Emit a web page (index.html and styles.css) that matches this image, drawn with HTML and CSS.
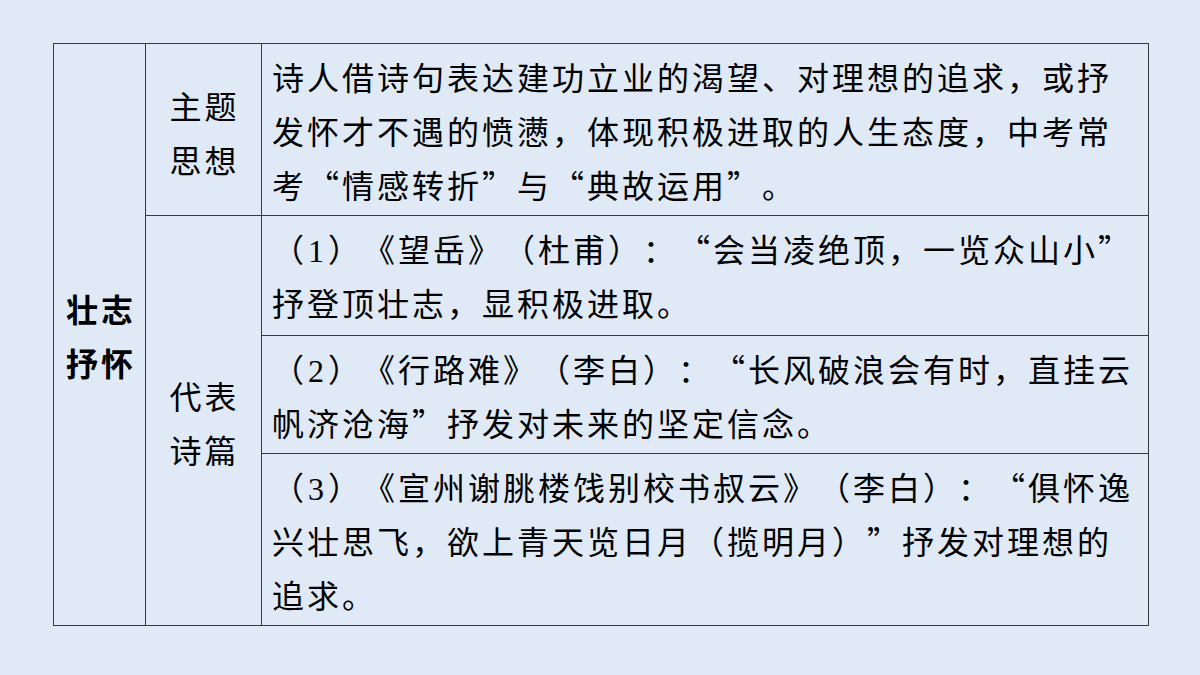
FILE: index.html
```html
<!DOCTYPE html>
<html lang="zh-CN">
<head>
<meta charset="utf-8">
<link rel="stylesheet" href="styles.css">
</head>
<body>
<div class="page">
  <table class="grid">
    <colgroup>
      <col class="c1">
      <col class="c2">
      <col class="c3">
    </colgroup>
    <tr>
      <td class="cat" rowspan="4">壮志<br>抒怀</td>
      <td class="label label-top">主题<br>思想</td>
      <td class="body">诗人借诗句表达建功立业的渴望、对理想的追求，或抒发怀才不遇的愤懑，体现积极进取的人生态度，中考常考“情感转折”与“典故运用”。</td>
    </tr>
    <tr>
      <td class="label" rowspan="3">代表<br>诗篇</td>
      <td class="body body-tall">（<span class="num">1</span>）《望岳》（杜甫）：“会当凌绝顶，一览众山小”抒登顶壮志，显积极进取。</td>
    </tr>
    <tr>
      <td class="body">（<span class="num">2</span>）《行路难》（李白）：“长风破浪会有时，直挂云帆济沧海”抒发对未来的坚定信念。</td>
    </tr>
    <tr>
      <td class="body">（<span class="num">3</span>）《宣州谢朓楼饯别校书叔云》（李白）：“俱怀逸兴壮思飞，欲上青天览日月（揽明月）”抒发对理想的追求。</td>
    </tr>
  </table>
</div>
</body>
</html>
```

FILE: styles.css
```css
html, body {
  margin: 0;
  padding: 0;
}
body {
  width: 1200px;
  height: 675px;
  background: #dfeaf6;
  font-family: "Noto Sans CJK SC", "Noto Sans", sans-serif;
  color: #000;
  overflow: hidden;
}
.page {
  padding: 43px 0 0 53px;
}
.grid {
  border-collapse: collapse;
  width: 1095px;
  table-layout: fixed;
}
.c1 { width: 92px; }
.c2 { width: 116px; }
.c3 { width: 887px; }
.grid td {
  border: 1px solid #3a3a3a;
  font-size: 32px;
  line-height: 54px;
  text-spacing-trim: space-all;
  font-feature-settings: "fwid" 1;
}
.cat {
  text-align: center;
  vertical-align: middle;
  font-weight: bold;
  padding: 0 0 0 3px;
  letter-spacing: 3px;
}
.label {
  text-align: center;
  vertical-align: middle;
  padding: 2px 0 0 2px;
  letter-spacing: 3px;
}
.label-top {
  padding-top: 4px;
}
.body {
  vertical-align: top;
  padding: 5px 6px 4px 10px;
  letter-spacing: 3px;
}
.body-tall {
  padding-bottom: 6px;
}
.num {
  font-family: "Liberation Serif", serif;
  font-feature-settings: normal;
  line-height: 1;
  padding: 0 1px;
}
```
